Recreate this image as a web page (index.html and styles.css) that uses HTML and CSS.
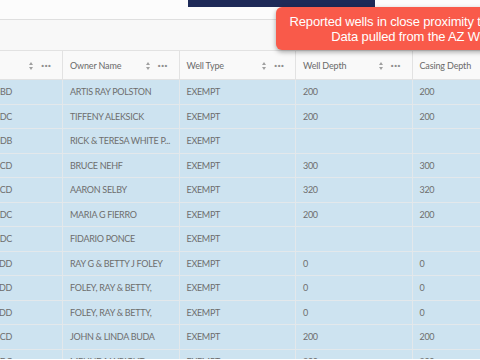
FILE: index.html
```html
<!DOCTYPE html>
<html>
<head>
<meta charset="utf-8">
<link rel="stylesheet" href="styles.css">
</head>
<body>
<div class="topbar"><div class="navy"></div></div>
<div class="toolbar"></div>
<div class="grid">
  <div class="th"><span class="label"></span><span class="sort"></span><span class="dots">&middot;&middot;&middot;</span></div>
  <div class="th"><span class="label">Owner Name</span><span class="sort"></span><span class="dots">&middot;&middot;&middot;</span></div>
  <div class="th"><span class="label">Well Type</span><span class="sort"></span><span class="dots">&middot;&middot;&middot;</span></div>
  <div class="th"><span class="label">Well Depth</span><span class="sort"></span><span class="dots">&middot;&middot;&middot;</span></div>
  <div class="th"><span class="label">Casing Depth</span></div>

  <div class="td id">28BBD</div><div class="td">ARTIS RAY POLSTON</div><div class="td">EXEMPT</div><div class="td">200</div><div class="td">200</div>
  <div class="td id">28BDC</div><div class="td">TIFFENY ALEKSICK</div><div class="td">EXEMPT</div><div class="td">200</div><div class="td">200</div>
  <div class="td id">28DDB</div><div class="td">RICK &amp; TERESA WHITE P...</div><div class="td">EXEMPT</div><div class="td"></div><div class="td"></div>
  <div class="td id">28BCD</div><div class="td">BRUCE NEHF</div><div class="td">EXEMPT</div><div class="td">300</div><div class="td">300</div>
  <div class="td id">28BCD</div><div class="td">AARON SELBY</div><div class="td">EXEMPT</div><div class="td">320</div><div class="td">320</div>
  <div class="td id">28BDC</div><div class="td">MARIA G FIERRO</div><div class="td">EXEMPT</div><div class="td">200</div><div class="td">200</div>
  <div class="td id">28BDC</div><div class="td">FIDARIO PONCE</div><div class="td">EXEMPT</div><div class="td"></div><div class="td"></div>
  <div class="td id">28DDD</div><div class="td">RAY G &amp; BETTY J FOLEY</div><div class="td">EXEMPT</div><div class="td">0</div><div class="td">0</div>
  <div class="td id">28DDD</div><div class="td">FOLEY, RAY &amp; BETTY,</div><div class="td">EXEMPT</div><div class="td">0</div><div class="td">0</div>
  <div class="td id">28DDD</div><div class="td">FOLEY, RAY &amp; BETTY,</div><div class="td">EXEMPT</div><div class="td">0</div><div class="td">0</div>
  <div class="td id">28BCD</div><div class="td">JOHN &amp; LINDA BUDA</div><div class="td">EXEMPT</div><div class="td">200</div><div class="td">200</div>
  <div class="td id">28BDC</div><div class="td">MELINDA WRIGHT</div><div class="td">EXEMPT</div><div class="td">200</div><div class="td">200</div>
</div>
<div class="tooltip">
  <div class="line">Reported wells in close proximity to the property.</div>
  <div class="line">Data pulled from the AZ Wells 55.</div>
</div>
</body>
</html>
```
FILE: styles.css
```css
html, body {
  margin: 0;
  padding: 0;
  width: 480px;
  height: 360px;
  overflow: hidden;
  background: #ffffff;
  font-family: Lato, "Open Sans", sans-serif;
}
body {
  position: relative;
}
.topbar {
  height: 19px;
  background: #fcfcfc;
  border-bottom: 1px solid #dfdfdf;
}
.navy {
  margin-left: 188px;
  width: 187px;
  height: 7px;
  background: #1e2a58;
}
.toolbar {
  height: 30px;
  background: #f8f8f8;
}
.grid {
  display: grid;
  grid-template-columns: repeat(5, 116.5px);
  grid-template-rows: 29px;
  grid-auto-rows: 24.5px;
  margin-left: -53.5px;
  border-top: 1px solid #e2e2e2;
  height: 308px;
  overflow: hidden;
}
.th {
  background: #f9f9f9;
  border-right: 1px solid #e2e2e2;
  border-bottom: 1px solid #e2e2e2;
  display: flex;
  align-items: center;
  padding: 0 11px 0 7px;
  font-size: 9px;
  letter-spacing: -0.15px;
  color: #6a6a6a;
  box-sizing: border-box;
}
.label {
  flex: 1;
  white-space: nowrap;
}
.sort {
  width: 0;
  height: 0;
  position: relative;
  margin-right: 8px;
  border-left: 2px solid transparent;
  border-right: 2px solid transparent;
  border-bottom: 3px solid #a0a0a0;
  top: -2px;
}
.sort::after {
  content: "";
  position: absolute;
  left: -2px;
  top: 5px;
  border-left: 2px solid transparent;
  border-right: 2px solid transparent;
  border-top: 3px solid #a0a0a0;
}
.dots {
  font-size: 12px;
  color: #8e8e8e;
  letter-spacing: 0;
  font-weight: 700;
  line-height: 1;
}
.td {
  background: #cde3f0;
  border-right: 1px solid #e3e8eb;
  border-bottom: 1px solid #e3e8eb;
  padding: 0 7px;
  font-size: 9px;
  letter-spacing: -0.3px;
  color: #6e6e6e;
  display: flex;
  align-items: center;
  white-space: nowrap;
  overflow: hidden;
  box-sizing: border-box;
}
.id {
  justify-content: flex-end;
  padding-right: 50px;
}
.tooltip {
  position: absolute;
  left: 276px;
  top: 7px;
  width: 299px;
  height: 43px;
  box-sizing: border-box;
  background: #f95a4a;
  border-radius: 6px;
  box-shadow: 0 2px 5px rgba(0, 0, 0, 0.35);
  color: #ffffff;
  font-family: "Liberation Sans", Arial, sans-serif;
  font-size: 13px;
  letter-spacing: -0.15px;
  line-height: 15px;
  text-align: center;
  padding-top: 7px;
  white-space: nowrap;
}
```
